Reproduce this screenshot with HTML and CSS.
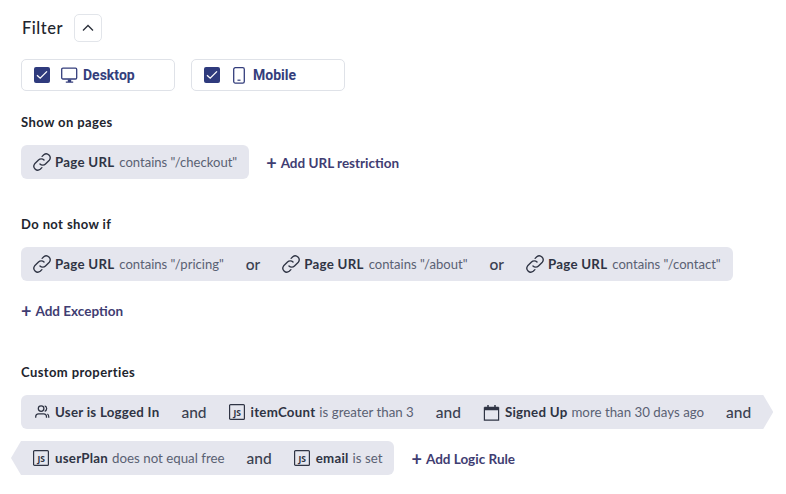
FILE: index.html
```html
<!DOCTYPE html>
<html lang="en">
<head>
<meta charset="utf-8">
<title>Filter</title>
<link rel="stylesheet" href="styles.css">
</head>
<body>
<svg class="defs" width="0" height="0" aria-hidden="true">
  <defs>
    <symbol id="i-link" viewBox="2 2 16 16">
      <path d="M8.200 11.800a3.400 3.400 0 0 0 4.900 0l3.400-3.400a3.500 3.500 0 0 0-4.900-4.900l-1.500 1.500M11.800 8.200a3.400 3.400 0 0 0-4.900 0l-3.400 3.400a3.500 3.500 0 0 0 4.900 4.900l1.500-1.500" fill="none" stroke="currentColor" stroke-width="1.200" stroke-linecap="round" stroke-linejoin="round"/>
    </symbol>
    <symbol id="i-js" viewBox="0 0 16 16">
      <rect x=".6" y=".6" width="14.800" height="14.800" rx="1" fill="none" stroke="currentColor" stroke-width="1.200"/>
      <text class="js-text" x="8.300" y="12.300" text-anchor="middle">JS</text>
    </symbol>
  </defs>
</svg>
<main class="panel">
  <header class="title-row">
    <h1 class="title">Filter</h1>
    <button class="collapse" type="button" aria-label="Collapse">
      <svg width="12" height="8" viewBox="0 0 12 8"><path d="M1 6.500 6 1.500l5 5" fill="none" stroke="#2a2f3a" stroke-width="1.300"/></svg>
    </button>
  </header>

  <div class="devices">
    <label class="device">
      <span class="check"><svg width="12" height="10" viewBox="0 0 12 10"><path d="M1 5.200 4.200 8.200 11 1.400" fill="none" stroke="#fff" stroke-width="1.300"/></svg></span>
      <svg class="device-icon" width="17" height="17" viewBox="0 0 17 17"><rect x=".7" y="1.200" width="15" height="10.800" rx="1.200" fill="none" stroke="currentColor" stroke-width="1.300"/><path d="M6.800 12.400h3.400v2H12.200v1.400H4.800v-1.400h2z" fill="currentColor"/></svg>
      <span class="device-name">Desktop</span>
    </label>
    <label class="device">
      <span class="check"><svg width="12" height="10" viewBox="0 0 12 10"><path d="M1 5.200 4.200 8.200 11 1.400" fill="none" stroke="#fff" stroke-width="1.300"/></svg></span>
      <svg class="device-icon phone" width="12" height="17" viewBox="0 0 12 17"><rect x=".7" y=".7" width="10.600" height="15.400" rx="1.600" fill="none" stroke="currentColor" stroke-width="1.300"/><path d="M4.500 13.200h3" stroke="currentColor" stroke-width="1.200"/></svg>
      <span class="device-name">Mobile</span>
    </label>
  </div>

  <section class="block block-show">
    <h2 class="label">Show on pages</h2>
    <div class="row">
      <div class="chip">
        <span class="cond"><svg class="ic"><use href="#i-link"/></svg><b>Page URL</b> <span class="desc desc-url">contains "/checkout"</span></span>
      </div>
      <a class="add add-url"><span class="plus">+</span>Add URL restriction</a>
    </div>
  </section>

  <section class="block block-hide">
    <h2 class="label">Do not show if</h2>
    <div class="chip">
      <span class="cond"><svg class="ic"><use href="#i-link"/></svg><b>Page URL</b> <span class="desc desc-url">contains "/pricing"</span></span>
      <span class="op">or</span>
      <span class="cond"><svg class="ic"><use href="#i-link"/></svg><b>Page URL</b> <span class="desc desc-url">contains "/about"</span></span>
      <span class="op">or</span>
      <span class="cond"><svg class="ic"><use href="#i-link"/></svg><b>Page URL</b> <span class="desc desc-url">contains "/contact"</span></span>
    </div>
    <a class="add add-exc"><span class="plus">+</span>Add Exception</a>
  </section>

  <section class="block block-custom">
    <h2 class="label">Custom properties</h2>
    <div class="chip chip-out">
      <span class="cond"><svg class="ic" viewBox="0 0 20 20"><circle cx="9" cy="6.200" r="3.100" fill="none" stroke="currentColor" stroke-width="1.400"/><path d="M3 16.500v-1.200q0-3.200 3.200-3.200h5.600q3.200 0 3.200 3.200v1.200M13 3.200q2.200.6 2.200 3t-2.200 3M17.500 16.500v-1.300q0-2.400-1.600-3" fill="none" stroke="currentColor" stroke-width="1.400"/></svg><b>User is Logged In</b></span>
      <span class="op">and</span>
      <span class="cond"><svg class="ic js"><use href="#i-js"/></svg><b>itemCount</b> <span class="desc">is greater than 3</span></span>
      <span class="op">and</span>
      <span class="cond"><svg class="ic cal" viewBox="0 0 18 18"><path d="M1.500 4h15v13h-15z" fill="none" stroke="currentColor" stroke-width="1.300"/><path d="M1.500 3h15v3.600h-15zM4.500 1h1.600v3H4.500zM11.900 1h1.600v3h-1.600z" fill="currentColor"/></svg><b>Signed Up</b> <span class="desc">more than 30 days ago</span></span>
      <span class="op">and</span>
    </div>
    <div class="row row-cont">
      <div class="chip chip-in">
        <span class="cond"><svg class="ic js"><use href="#i-js"/></svg><b>userPlan</b> <span class="desc">does not equal free</span></span>
        <span class="op">and</span>
        <span class="cond"><svg class="ic js"><use href="#i-js"/></svg><b>email</b> <span class="desc">is set</span></span>
      </div>
      <a class="add add-rule"><span class="plus">+</span>Add Logic Rule</a>
    </div>
  </section>
</main>
</body>
</html>
```
FILE: styles.css
```css
* { box-sizing: border-box; }
html, body { margin: 0; padding: 0; background: #fff; }
body { width: 786px; height: 494px; overflow: hidden; font-family: Lato, "Noto Sans", sans-serif; color: #2a2f3a; }
.defs { position: absolute; }
.panel { padding: 14px 0 0 21px; }

.title-row { display: flex; align-items: center; height: 28px; }
.title { width: 52px; margin: 0 0 0 1px; font-size: 16.500px; font-weight: 500; letter-spacing: .5px; color: #22252e; }
.collapse { display: flex; align-items: center; justify-content: center; width: 28px; height: 28px; padding: 0; background: #fff; border: 1px solid #e2e5ea; border-radius: 5px; }

.devices { display: flex; gap: 16px; margin-top: 17px; }
.device { display: flex; align-items: center; width: 154px; height: 32px; padding-left: 12px; background: #fff; border: 1px solid #dfe2e8; border-radius: 5px; color: #343e7c; }
.check { display: flex; align-items: center; justify-content: center; width: 16px; height: 16px; background: #2f3b7d; border-radius: 2px; }
.device-icon { margin-left: 11px; }
.device-icon.phone { margin-left: 13px; margin-right: 2px; }
.device-name { margin-left: 5px; font-family: Roboto, sans-serif; font-weight: 700; font-size: 14px; }
.device-icon.phone + .device-name { margin-left: 6px; }

.block-show { margin-top: 23px; }
.block-hide { margin-top: 37px; }
.block-custom { margin-top: 44px; }
.label { margin: 0; height: 18px; font-size: 13px; line-height: 16px; font-weight: 700; letter-spacing: .4px; color: #22252e; }

.row { display: flex; align-items: center; }
.block-show .row { margin-top: 13px; }
.row-cont { margin-top: 12px; margin-left: -10px; }

.chip { display: inline-flex; align-items: center; height: 34px; margin-top: 13px; padding: 0 12px; background: #e5e6ee; border-radius: 6px; font-size: 13.300px; color: #5a6173; white-space: nowrap; }
.row .chip { margin-top: 0; }
.cond { display: inline-flex; align-items: center; }
.cond b { font-weight: 700; letter-spacing: .25px; color: #2f3444; }
.desc { margin-left: 4px; }
.desc-url { margin-left: 5px; font-size: 13.050px; }
.ic { width: 18px; height: 18px; margin-right: 4px; color: #2f3444; flex: none; }
.ic.js { width: 16px; height: 16px; margin-right: 6px; }
.ic.cal { width: 17px; height: 17px; margin-right: 5px; }
.js-text { font-family: "Noto Sans", sans-serif; font-size: 8.500px; font-weight: 700; fill: currentColor; }
.op { margin: 0 22px; font-size: 15.500px; font-weight: 500; color: #3a4050; }

.chip-out { padding-right: 0; border-radius: 6px 0 0 6px; clip-path: polygon(0 0, calc(100% - 10px) 0, 100% 50%, calc(100% - 10px) 100%, 0 100%); }
.chip-in { padding-left: 22px; border-radius: 0 6px 6px 0; clip-path: polygon(10px 0, 100% 0, 100% 100%, 10px 100%, 0 50%); }

.add { display: inline-flex; align-items: center; font-size: 13.500px; font-weight: 700; color: #3f3d72; }
.plus { margin-right: 4px; font-size: 18px; line-height: 1; font-weight: 700; }
.add-url { margin-left: 17px; position: relative; top: 1px; }
.add-exc { display: flex; margin-top: 21px; }
.add-rule { margin-left: 17px; position: relative; top: 1px; }
```
